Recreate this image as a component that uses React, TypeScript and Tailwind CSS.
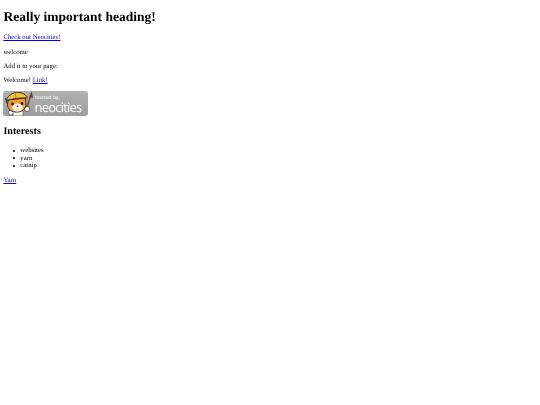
function NeocitiesBadge() {
  return (
    <svg width="85" height="25" viewBox="0 0 85 25" className="block">
      <defs>
        <linearGradient id="badgeBg" x1="0" y1="0" x2="0" y2="1">
          <stop offset="0" stopColor="#b0b0b0" />
          <stop offset="1" stopColor="#9e9e9e" />
        </linearGradient>
      </defs>
      <rect x="0" y="0" width="85" height="25" rx="3" fill="url(#badgeBg)" />
      {/* wrench */}
      <path d="M2.5 7 L4 12 L5 12 M7.5 7 L6.5 12 L5 12 L8 21" stroke="#4a4a4a" strokeWidth="1.5" fill="none" />
      <circle cx="8" cy="21.5" r="2.6" fill="#fff" stroke="#333" strokeWidth="0.7" />
      {/* brush */}
      <path d="M24 16 L27.5 5" stroke="#6b4a35" strokeWidth="1.5" />
      <path d="M27 6 L28.5 0.8 L29.6 6.5 Z" fill="#a8283c" stroke="#3a2020" strokeWidth="0.4" />
      <circle cx="24" cy="18" r="2.6" fill="#fff" stroke="#333" strokeWidth="0.7" />
      {/* body */}
      <path d="M10 20 L20 20 L20 25 L10 25 Z" fill="#f3efe6" stroke="#333" strokeWidth="0.5" />
      {/* head */}
      <path d="M5 9 L4.5 15 C6 20 11 21.5 15 21 C20 20.5 23 17 23 13 L22.5 7 Z" fill="#ee9a35" stroke="#33261a" strokeWidth="0.9" />
      <ellipse cx="14.5" cy="16.5" rx="5.5" ry="4" fill="#fdf4e3" />
      <path d="M14.5 12.5 L13 16 L16 16 Z" fill="#fdf4e3" />
      <circle cx="9.5" cy="13" r="1.4" fill="#1e1a18" />
      <circle cx="19" cy="12.5" r="1.4" fill="#1e1a18" />
      <ellipse cx="14.5" cy="15.2" rx="1" ry="0.7" fill="#33261a" />
      {/* hard hat */}
      <path d="M3.5 9.5 C5 3 12 0.5 18 1.8 C21 2.5 23.5 4.5 24.5 7 C18 6.5 10 7.5 3.5 9.5 Z" fill="#f4c23c" stroke="#33261a" strokeWidth="0.9" />
      <path d="M12 2 L13 7" stroke="#c98a20" strokeWidth="1.2" />
      <text x="31.8" y="8.4" fontFamily="'Open Sans', sans-serif" fontSize="5" fontWeight="600" fill="#f0f0f0">
        hosted by,
      </text>
      <text x="31.6" y="21" fontFamily="'Open Sans', sans-serif" fontSize="13" textLength="47.5" fill="#fafafa">
        neocities
      </text>
    </svg>
  );
}

function App() {
  const interests = ["websites", "yarn", "catnip"];

  return (
    <div className="min-h-[405px] bg-white px-[3.4px] text-[6.75px] leading-[7.6px] text-black font-['Liberation_Serif',serif] blur-[0.3px] [text-rendering:geometricPrecision]">
      <h1 className="pt-[9.05px] pb-[9.65px] text-[13.5px] leading-[15.6px] font-bold">
        Really important heading!
      </h1>
      <p>
        <a href="#" className="text-[#0000ee] underline">
          Check out Neocities!
        </a>
      </p>
      <p className="mt-[6.75px]">welcome</p>
      <p className="mt-[6.75px]">Add it to your page:</p>
      <p className="mt-[6.75px]">
        Welcome!{" "}
        <a href="#" className="text-[#0000ee] underline">
          Link!
        </a>
      </p>
      <div className="mt-[6.4px]">
        <NeocitiesBadge />
      </div>
      <h2 className="mt-[9.9px] text-[10.125px] leading-[11.6px] font-bold">Interests</h2>
      <ul className="mt-[9.2px] pl-[10px]">
        {interests.map((item) => (
          <li key={item} className="flex items-center gap-[4.9px]">
            <span className="h-[2px] w-[2px] rounded-full bg-black" />
            {item}
          </li>
        ))}
      </ul>
      <p className="mt-[6.75px]">
        <a href="#" className="text-[#0000ee] underline">
          Yarn
        </a>
      </p>
    </div>
  );
}

export default App;
